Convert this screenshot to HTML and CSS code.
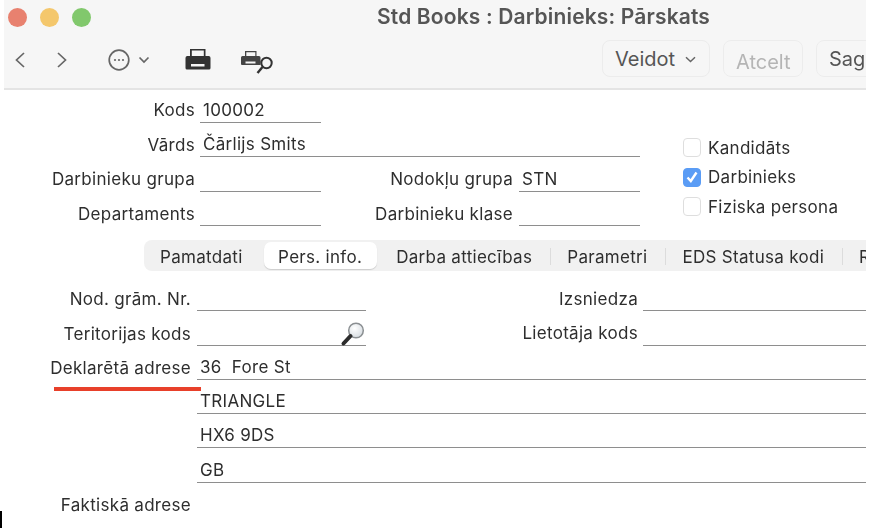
FILE: index.html
```html
<!DOCTYPE html>
<html lang="lv">
<head>
<meta charset="utf-8">
<title>Std Books : Darbinieks: Pārskats</title>
<link rel="stylesheet" href="styles.css">
</head>
<body>
<div class="window">
  <header class="chrome">
    <div class="titlebar">
      <div class="lights"><span class="light red"></span><span class="light yellow"></span><span class="light green"></span></div>
      <h1 class="title">Std Books : Darbinieks: Pārskats</h1>
    </div>
    <div class="toolbar">
      <svg class="ico nav" width="18" height="20" viewBox="0 0 18 20"><path d="M10 3 L2.500 10 L10 17" /></svg>
      <span class="nav-sep"></span>
      <svg class="ico nav" width="18" height="20" viewBox="0 0 18 20"><path d="M3 3 L10.500 10 L3 17" /></svg>
      <svg class="ico more" width="22" height="22" viewBox="0 0 22 22"><circle cx="11" cy="11" r="9.800"/><circle class="dot" cx="7" cy="11" r="1.100"/><circle class="dot" cx="11" cy="11" r="1.100"/><circle class="dot" cx="15" cy="11" r="1.100"/></svg>
      <svg class="ico chev" width="12" height="8" viewBox="0 0 12 8"><path d="M1.500 1.500 L6 6 L10.500 1.500"/></svg>
      <svg class="print" width="26" height="22" viewBox="0 0 26 22"><path fill="#333" fill-rule="evenodd" d="M5 1h15.500v7H24a2 2 0 0 1 1.500 2v10a1.500 1.500 0 0 1-1.500 1.500H2A1.500 1.500 0 0 1 .5 20V10A2 2 0 0 1 2 8h3zM6.800 2.500V8h12V2.500zM6 16v2.500h13.500V16z"/></svg>
      <svg class="preview" width="34" height="26" viewBox="0 0 34 26"><path fill="#444" fill-rule="evenodd" d="M4 1h11.500v5h2.500a1.500 1.500 0 0 1 1.500 1.500V15H1a1 1 0 0 1-1-1V7.500A1.500 1.500 0 0 1 1.500 6H4zM5.300 2.200V6h9V2.200zM4.500 11.500v2h10v-2z"/><circle cx="25.500" cy="13" r="5.200" fill="none" stroke="#333" stroke-width="2"/><path d="M21.500 17 L16.500 23" stroke="#333" stroke-width="2.400" fill="none"/></svg>
      <div class="actions">
        <button class="btn btn-create" type="button">Veidot <svg class="ico mini" width="11" height="7" viewBox="0 0 11 7"><path d="M1 1.200 L5.500 5.500 L10 1.200"/></svg></button>
        <button class="btn btn-cancel" type="button">Atcelt</button>
        <button class="btn btn-save" type="button">Saglabāt</button>
      </div>
    </div>
  </header>

  <section class="top-form">
    <div class="top-fields">
      <div class="row"><label class="lbl">Kods</label><div class="field w-short">100002</div></div>
      <div class="row"><label class="lbl">Vārds</label><div class="field w-grow">Čārlijs Smits</div></div>
      <div class="row"><label class="lbl">Darbinieku grupa</label><div class="field w-short"></div><label class="lbl-mid">Nodokļu grupa</label><div class="field w-short">STN</div></div>
      <div class="row"><label class="lbl">Departaments</label><div class="field w-short"></div><label class="lbl-mid">Darbinieku klase</label><div class="field w-short"></div></div>
    </div>
    <div class="checks">
      <div class="check"><span class="box"></span>Kandidāts</div>
      <div class="check"><span class="box on"><svg width="14" height="14" viewBox="0 0 14 14"><path d="M2.500 7.500 L5.800 11 L11.500 2.500"/></svg></span>Darbinieks</div>
      <div class="check"><span class="box"></span>Fiziska persona</div>
    </div>
  </section>

  <nav class="tabs">
    <span class="tab first">Pamatdati</span>
    <span class="tab active">Pers. info.</span>
    <span class="tab">Darba attiecības</span>
    <span class="sep"></span>
    <span class="tab">Parametri</span>
    <span class="sep"></span>
    <span class="tab">EDS Statusa kodi</span>
    <span class="sep"></span>
    <span class="tab">Radinieki</span>
  </nav>

  <section class="lower-form">
    <div class="lrow"><label class="lbl2">Nod. grām. Nr.</label><div class="field w-mid"></div><label class="lbl-right">Izsniedza</label><div class="field w-fill"></div></div>
    <div class="lrow"><label class="lbl2">Teritorijas kods</label><div class="field w-mid has-icon">
      <svg class="lens" width="26" height="26" viewBox="0 0 26 26"><defs><radialGradient id="glass" cx="40%" cy="35%" r="70%"><stop offset="0" stop-color="#fff"/><stop offset="1" stop-color="#d5dbe0"/></radialGradient></defs><circle cx="16" cy="9.500" r="7.300" fill="url(#glass)" stroke="#8b8f92" stroke-width="1.500"/><path d="M10.500 15 L3.500 22.500" stroke="#2c2c2c" stroke-width="4" stroke-linecap="round"/></svg>
    </div><label class="lbl-right">Lietotāja kods</label><div class="field w-fill"></div></div>
    <div class="lrow"><label class="lbl2">Deklarētā adrese</label><div class="field w-fill">36&nbsp; Fore St</div></div>
    <div class="lrow"><span class="lbl2"></span><div class="field w-fill">TRIANGLE</div></div>
    <div class="lrow"><span class="lbl2"></span><div class="field w-fill">HX6 9DS</div></div>
    <div class="lrow"><span class="lbl2"></span><div class="field w-fill">GB</div></div>
    <div class="lrow"><label class="lbl2">Faktiskā adrese</label></div>
  </section>
  <div class="redline"></div>
</div>
<div class="cursor-mark"></div>
</body>
</html>
```
FILE: styles.css
```css
* { box-sizing: border-box; }
html, body { margin: 0; height: 100%; background: #fff; overflow: hidden; }
body { font-family: Inter, "Liberation Sans", sans-serif; font-size: 17px; letter-spacing: 0.3px; color: #2e2e2e; }
.window { position: relative; width: 862px; height: 528px; margin-left: 4px; overflow: hidden; filter: blur(0.35px); }
.chrome { height: 90px; background: #f6f6f6; border-bottom: 2px solid #e4e4e4; }
.titlebar { position: relative; height: 38px; padding: 8px 0 0 4px; }
.lights { display: flex; gap: 13px; }
.light { width: 19px; height: 19px; border-radius: 50%; }
.red { background: #e8816f; }
.yellow { background: #f4c76c; }
.green { background: #81c86c; }
.title { position: absolute; left: 373px; top: 4px; margin: 0; font-size: 21px; font-weight: 600; color: #555; white-space: nowrap; letter-spacing: 0.15px; }
.toolbar { display: flex; align-items: center; height: 42px; padding-left: 10px; }
.ico { fill: none; stroke: #666; stroke-width: 1.700; flex: none; margin-top: 2px; }
.dot { fill: #666; stroke: none; }
.nav-sep { width: 1px; height: 24px; background: #ececec; margin: 2px 14px 0 9px; }
.more { margin-left: 35px; }
.chev { margin-left: 8px; }
.print { margin-left: 35px; flex: none; }
.preview { margin-left: 30px; margin-top: 7px; flex: none; }
.actions { display: flex; gap: 13px; margin-left: 327px; flex: none; margin-top: -1px; }
.btn { height: 37px; border: 1.500px solid #ececec; border-radius: 8px; background: #f6f6f6; font: inherit; font-size: 20px; color: #555; padding: 0 12px; display: flex; align-items: center; gap: 10px; white-space: nowrap; letter-spacing: 0; }
.mini { stroke-width: 1.500; margin-top: 2px; }
.btn-create { width: 108px; }
.btn-cancel { width: 80px; color: #b5b5b5; padding-top: 7px; }
.top-form { display: flex; margin-top: -2px; }
.top-fields { width: 636px; flex: none; }
.row { display: flex; align-items: flex-end; height: 34.500px; }
.lbl { width: 191px; text-align: right; margin-right: 5px; flex: none; line-height: 22px; padding-bottom: 1.500px; white-space: nowrap; }
.lbl-mid { width: 192px; text-align: right; margin-right: 6px; flex: none; line-height: 22px; padding-bottom: 1.500px; white-space: nowrap; }
.field { border-bottom: 1.500px solid #8e8e8e; height: 24px; line-height: 23px; padding-left: 3px; white-space: nowrap; flex: none; }
.w-short { width: 121px; }
.w-grow { width: 440px; }
.w-mid { width: 169px; }
.w-fill { flex: 1 1 auto; }
.checks { margin-left: 43px; padding-top: 50px; display: flex; flex-direction: column; gap: 10.500px; flex: none; }
.check { display: flex; align-items: center; gap: 7px; height: 19px; white-space: nowrap; }
.box { width: 18px; height: 19px; border: 1.500px solid #dedede; border-radius: 4px; background: #fff; display: flex; align-items: center; justify-content: center; flex: none; }
.box.on { background: #5a9cf5; border-color: #5a9cf5; }
.box path { fill: none; stroke: #fff; stroke-width: 2.400; }
.tabs { display: flex; align-items: center; height: 31px; margin: 14px 0 0 140px; background: #f1f1f1; border-radius: 8px 0 0 8px; overflow: hidden; white-space: nowrap; }
.tab { flex: none; padding: 0 18px 0 16px; line-height: 31px; height: 27px; }
.tab.first { padding: 0 21.500px 0 16px; }
.tab.active { background: #fff; border-radius: 7px; box-shadow: 0 1px 1px rgba(0,0,0,.15); padding: 0 15px 0 14px; margin-right: 3px; }
.sep { width: 1px; height: 17px; background: #dcdcdc; flex: none; margin-top: 2px; }
.lower-form { padding-top: 6px; }
.lrow { display: flex; align-items: flex-end; height: 34.300px; }
.lbl2 { width: 187px; text-align: right; margin-right: 6px; flex: none; line-height: 22px; padding-bottom: 1px; white-space: nowrap; }
.lbl-right { width: 272px; text-align: right; margin-right: 5px; flex: none; line-height: 22px; padding-bottom: 1.500px; white-space: nowrap; }
.has-icon { position: relative; }
.lens { position: absolute; right: 0; top: -1px; }
.redline { position: absolute; left: 50px; top: 387px; width: 147px; height: 4px; background: #e8402a; }
.cursor-mark { position: absolute; left: 0; top: 511px; width: 2px; height: 17px; background: #000; }
```
